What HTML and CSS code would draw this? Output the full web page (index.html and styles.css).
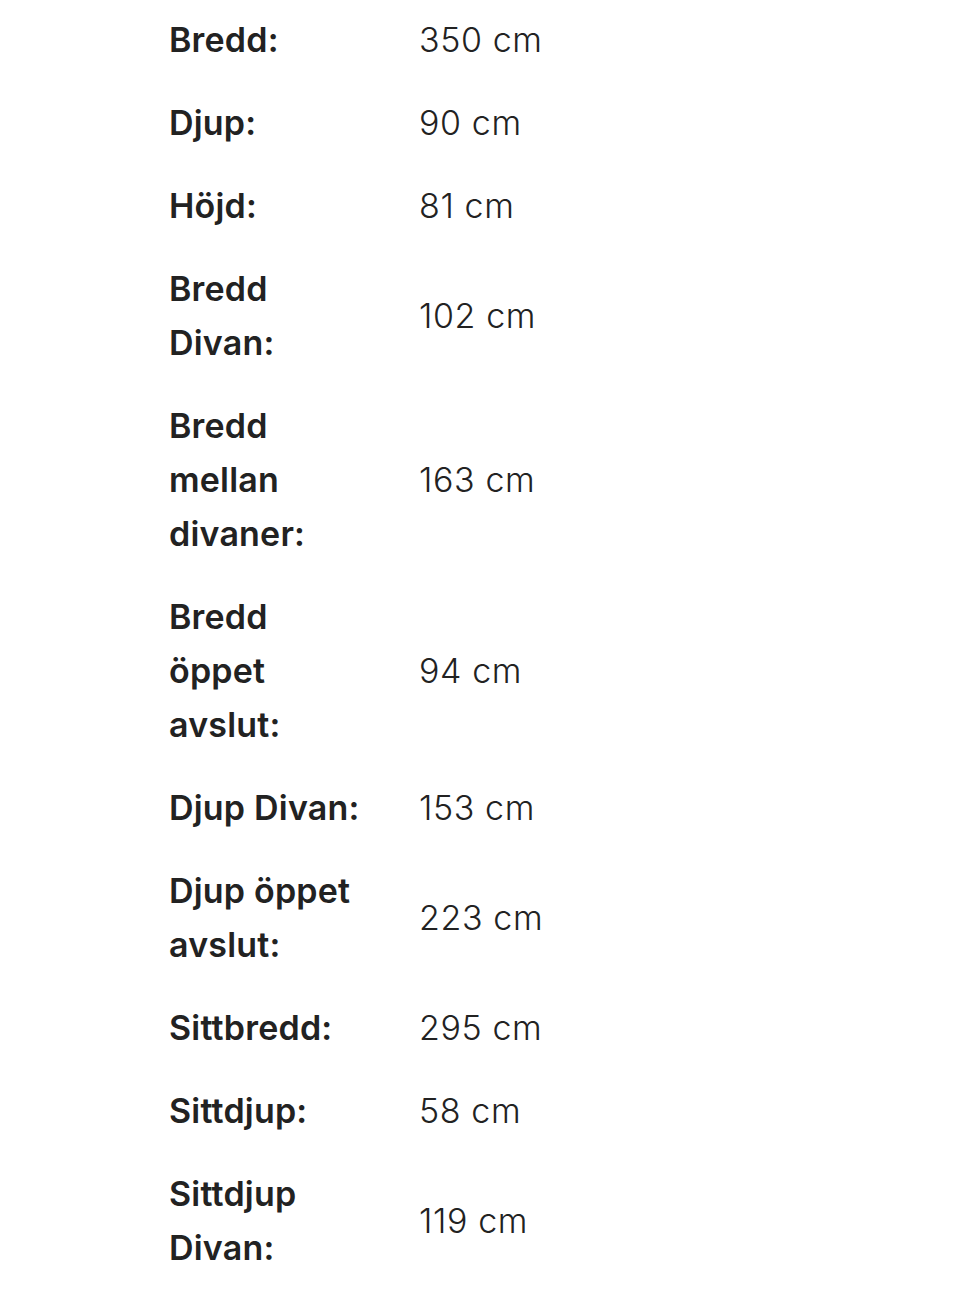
FILE: index.html
```html
<!DOCTYPE html>
<html lang="sv">
<head>
<meta charset="utf-8">
<link rel="stylesheet" href="styles.css">
</head>
<body>
<div class="specs">
  <div class="label">Bredd:</div><div class="value">350 cm</div>
  <div class="label">Djup:</div><div class="value">90 cm</div>
  <div class="label">Höjd:</div><div class="value">81 cm</div>
  <div class="label">Bredd<br>Divan:</div><div class="value">102 cm</div>
  <div class="label">Bredd<br>mellan<br>divaner:</div><div class="value">163 cm</div>
  <div class="label">Bredd<br>öppet<br>avslut:</div><div class="value">94 cm</div>
  <div class="label">Djup Divan:</div><div class="value">153 cm</div>
  <div class="label">Djup öppet<br>avslut:</div><div class="value">223 cm</div>
  <div class="label">Sittbredd:</div><div class="value">295 cm</div>
  <div class="label">Sittdjup:</div><div class="value">58 cm</div>
  <div class="label">Sittdjup<br>Divan:</div><div class="value">119 cm</div>
</div>
</body>
</html>
```
FILE: styles.css
```css
html, body {
  margin: 0;
  padding: 0;
  background: #fff;
}
body {
  font-family: Inter, "Noto Sans", sans-serif;
  color: #222;
}
.specs {
  display: grid;
  grid-template-columns: 250px auto;
  align-items: center;
  margin: -2px 0 0 169px;
  font-size: 34px;
  line-height: 54px;
}
.label, .value {
  padding: 14.5px 0;
}
.label {
  font-weight: 600;
  letter-spacing: 0.2px;
}
.value {
  font-weight: 300;
  letter-spacing: 0.6px;
}
```
